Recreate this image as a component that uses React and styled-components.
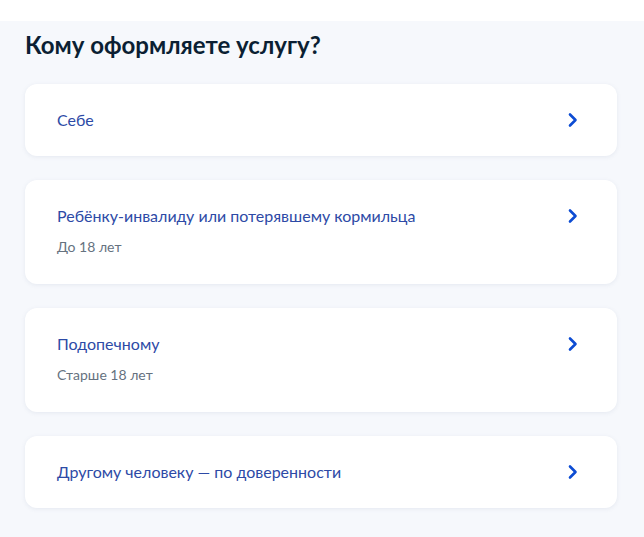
import React from 'react';
import styled, { createGlobalStyle } from 'styled-components';

const GlobalStyle = createGlobalStyle`
  html, body {
    margin: 0;
    padding: 0;
    background: #ffffff;
    font-family: Lato, "Noto Sans", sans-serif;
  }
`;

const Page = styled.div`
  padding-top: 21px;
`;

const Section = styled.section`
  background: #f6f8fc;
  padding: 8px 27px 40px 25px;
  min-height: 480px;
`;

const Title = styled.h1`
  margin: 0 0 23px;
  font-size: 24px;
  line-height: 32px;
  font-weight: 700;
  color: #0b1f33;
`;

const List = styled.div`
  display: flex;
  flex-direction: column;
  gap: 24px;
`;

const Card = styled.div`
  display: flex;
  align-items: flex-start;
  justify-content: space-between;
  background: #ffffff;
  border-radius: 12px;
  padding: 24px 32px;
  box-shadow: 0 1px 4px rgba(107, 125, 160, 0.12);
  cursor: pointer;
`;

const Texts = styled.div`
  display: flex;
  flex-direction: column;
  gap: 9px;
`;

const Label = styled.div`
  font-size: 16px;
  line-height: 24px;
  color: #2d4aa6;
`;

const Hint = styled.div`
  font-size: 14px;
  line-height: 20px;
  color: #66727f;
  margin-bottom: 3px;
`;

const Arrow = styled.svg`
  width: 24px;
  height: 24px;
  flex-shrink: 0;
`;

const Chevron = () => (
  <Arrow viewBox="0 0 24 24" fill="none">
    <path d="M9 6.5l5.5 5.5L9 17.5" stroke="#0d4cd3" strokeWidth="2.6" strokeLinecap="round" strokeLinejoin="round" />
  </Arrow>
);

const options = [
  { label: 'Себе' },
  { label: 'Ребёнку-инвалиду или потерявшему кормильца', hint: 'До 18 лет' },
  { label: 'Подопечному', hint: 'Старше 18 лет' },
  { label: 'Другому человеку — по доверенности' },
];

export default function App() {
  return (
    <>
      <GlobalStyle />
      <Page>
        <Section>
          <Title>Кому оформляете услугу?</Title>
          <List>
            {options.map(o => (
              <Card key={o.label}>
                <Texts>
                  <Label>{o.label}</Label>
                  {o.hint && <Hint>{o.hint}</Hint>}
                </Texts>
                <Chevron />
              </Card>
            ))}
          </List>
        </Section>
      </Page>
    </>
  );
}
